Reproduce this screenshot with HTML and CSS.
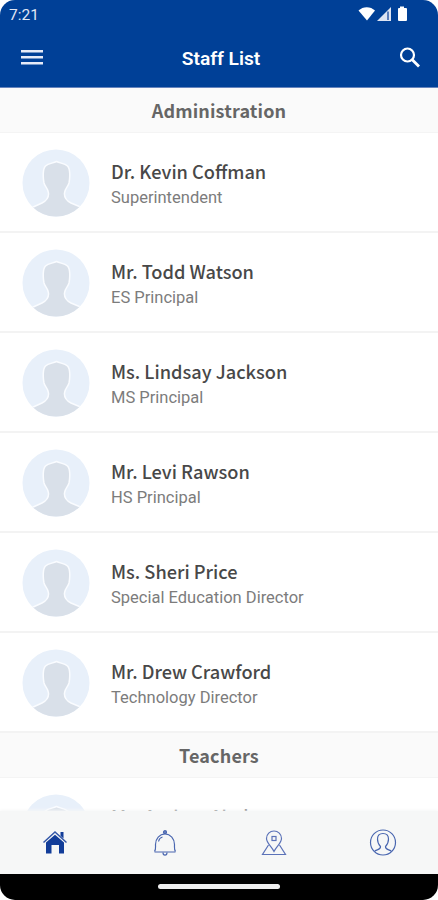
FILE: index.html
```html
<!DOCTYPE html>
<html lang="en">
<head>
    <meta charset="UTF-8">
    <meta name="viewport" content="width=device-width, initial-scale=1.0">
    <title>Staff List</title>
    <link rel="stylesheet" href="styles.css">
</head>
<body>

    <!-- Shared avatar -->
    <svg class="sprite">
        <symbol id="avatar" viewBox="0 0 68 68">
            <clipPath id="avatar-clip"><circle cx="34" cy="34" r="33.5"/></clipPath>
            <g clip-path="url(#avatar-clip)">
                <rect width="68" height="68" fill="#e8f0fa"/>
                <path d="M34.500 12.500C31 14.500 26.500 14 23.500 17C20.500 20 21 29 22 34C23 38 26 39 26.500 44C27 49 24 52 20 54L9 59V72H61V59L49 54C45 52 42 49 42.500 44C43 39 46 38 47 34C48 29 48.500 20 45.500 17C42.500 14 38 14.500 34.500 12.500Z" fill="#d9e0e9" stroke="#fafcff" stroke-width="1.500"/>
            </g>
        </symbol>
    </svg>

    <div class="phone">
        <header class="top">
            <div class="status-bar">
                <span class="time">7:21</span>
                <svg class="status-icons" width="52" height="18" viewBox="0 0 52 18" fill="#fff">
                    <path d="M0.500 5.500C5 1 12.500 1 17 5.500L9 15.500Z"/>
                    <path d="M33 2V16H19Z" fill="#dde4f3"/>
                    <path d="M30 6.500V15" stroke="#2f5ca8" stroke-width="1.500"/>
                    <path d="M42 1.500H46V3H48Q49 3 49 4V15Q49 16 48 16H41Q40 16 40 15V4Q40 3 41 3H42Z"/>
                </svg>
            </div>
            <div class="app-bar">
                <svg class="menu-icon" width="22" height="16" viewBox="0 0 22 16" fill="#e6ebf8">
                    <path d="M0 0H22V2.500H0ZM0 6H22V8.500H0ZM0 12H22V14.500H0Z"/>
                </svg>
                <h1>Staff List</h1>
                <svg class="search-icon" width="22" height="22" viewBox="0 0 22 22" fill="none" stroke="#fff">
                    <circle cx="8.500" cy="8" r="6.500" stroke-width="2.200"/>
                    <path d="M12.500 12L20 19.500" stroke-width="2.800"/>
                </svg>
            </div>
        </header>

        <main class="staff">
            <h2 class="section">Administration</h2>
            <div class="row">
                <svg class="avatar"><use href="#avatar"/></svg>
                <div class="info"><div class="name">Dr. Kevin Coffman</div><div class="role">Superintendent</div></div>
            </div>
            <div class="row">
                <svg class="avatar"><use href="#avatar"/></svg>
                <div class="info"><div class="name">Mr. Todd Watson</div><div class="role">ES Principal</div></div>
            </div>
            <div class="row">
                <svg class="avatar"><use href="#avatar"/></svg>
                <div class="info"><div class="name">Ms. Lindsay Jackson</div><div class="role">MS Principal</div></div>
            </div>
            <div class="row">
                <svg class="avatar"><use href="#avatar"/></svg>
                <div class="info"><div class="name">Mr. Levi Rawson</div><div class="role">HS Principal</div></div>
            </div>
            <div class="row">
                <svg class="avatar"><use href="#avatar"/></svg>
                <div class="info"><div class="name">Ms. Sheri Price</div><div class="role">Special Education Director</div></div>
            </div>
            <div class="row">
                <svg class="avatar"><use href="#avatar"/></svg>
                <div class="info"><div class="name">Mr. Drew Crawford</div><div class="role">Technology Director</div></div>
            </div>
            <h2 class="section">Teachers</h2>
            <div class="row">
                <svg class="avatar"><use href="#avatar"/></svg>
                <div class="info"><div class="name">Ms. Andrea Abel</div></div>
            </div>
        </main>

        <nav class="tabs">
            <!-- Home -->
            <svg width="28" height="28" viewBox="0 0 28 28" fill="#123d99">
                <path d="M2.500 13.500L14 3L25.500 13.500" fill="none" stroke="#3558a8" stroke-width="1.500"/>
                <path d="M19.500 3H22.500V9.500L19.500 6.700Z"/>
                <path d="M5 13.500L14 5.700L23 13.500V24.500H18V16H10.500V24.500H5Z"/>
            </svg>
            <!-- Alerts -->
            <svg width="28" height="28" viewBox="0 0 28 28" fill="none" stroke="#4a67b0" stroke-width="1.200">
                <path d="M4.500 22.500C6 21 5.500 19 5.500 15.500C5.500 10 9.500 5 15 5S24.500 10 24.500 15.500C24.500 19 24 21 25.500 22.500M4.500 23H25.500"/>
                <circle cx="15" cy="3.200" r="1.500" fill="#6b83c0"/>
                <path d="M13 23.500C13 27 17 27 17 23.500M8.500 12.500C9 10 10.500 8.500 12.500 8"/>
            </svg>
            <!-- Map -->
            <svg width="28" height="28" viewBox="0 0 28 28" fill="none" stroke="#5b72b8" stroke-width="1.200">
                <path d="M14 22.500C11.500 17.500 6.500 14 6.500 9.500A7.500 7.500 0 0 1 21.500 9.500C21.500 14 16.500 17.500 14 22.500Z"/>
                <rect x="12" y="7.500" width="4" height="4"/>
                <path d="M8.500 16L2.500 25.500H25.500L19.500 16"/>
            </svg>
            <!-- Profile -->
            <svg width="28" height="28" viewBox="0 0 28 28" fill="none" stroke="#4a67b0" stroke-width="1.200">
                <circle cx="14" cy="13.500" r="12.500"/>
                <path d="M5.500 22.500C7 20.500 12 21 11.500 17.500C9.500 15.500 8.500 13 8.500 10C8.500 6.500 10.500 4.500 14 4.500S19.500 6.500 19.500 10C19.500 13 18.500 15.500 16.500 17.500C16 21 21 20.500 22.500 22.500"/>
            </svg>
        </nav>

        <div class="gesture-bar"><div class="handle"></div></div>
    </div>

</body>
</html>
```

FILE: styles.css
```css
* {
    box-sizing: border-box;
}
body {
    margin: 0;
    background-color: #fff;
    font-family: Roboto, sans-serif;
}
.sprite {
    display: block;
    width: 0;
    height: 0;
}
.phone {
    display: flex;
    flex-direction: column;
    width: 438px;
    height: 900px;
    overflow: hidden;
    border-radius: 15px;
}
.top {
    height: 88px;
    flex-shrink: 0;
    background-color: #004097;
    border-bottom: 1px solid #6684bd;
    color: #fff;
}
.status-bar {
    display: flex;
    justify-content: space-between;
    height: 28px;
    padding: 5px 28px 0 9px;
}
.time {
    font-size: 15.5px;
    line-height: 20px;
    color: #e0e7f5;
}
.app-bar {
    display: flex;
    align-items: center;
    justify-content: space-between;
    height: 59px;
    padding: 0 17px 0 21px;
}
.app-bar h1 {
    margin: 2px 0 0;
    font-size: 19.2px;
    font-weight: 600;
}
.staff {
    flex: 1;
    min-height: 0;
    overflow: hidden;
}
.section {
    height: 44.5px;
    margin: 0;
    background-color: #fafafa;
    border-bottom: 1px solid #f4f4f4;
    font-family: "Noto Sans CJK SC", sans-serif;
    font-size: 18px;
    font-weight: 700;
    line-height: 44px;
    letter-spacing: 0.15px;
    text-align: center;
    color: #666;
}
.row {
    display: flex;
    align-items: center;
    gap: 21px;
    height: 100.15px;
    padding: 2px 0 0 22px;
    border-bottom: 2px solid #f3f3f3;
}
.avatar {
    width: 68px;
    height: 68px;
}
.info {
    height: 54px;
}
.name {
    font-family: "Noto Sans CJK SC", sans-serif;
    font-size: 18.2px;
    font-weight: 500;
    line-height: 30px;
    color: #484848;
}
.role {
    margin-top: 2px;
    font-size: 16.5px;
    line-height: 20px;
    color: #7c7c7c;
}
.tabs {
    display: flex;
    align-items: center;
    justify-content: space-around;
    height: 63px;
    flex-shrink: 0;
    background-color: #f6f7f7;
    box-shadow: 0 -1px 3px #f6f7f7;
}
.gesture-bar {
    display: flex;
    justify-content: center;
    height: 26px;
    flex-shrink: 0;
    padding-top: 10px;
    background-color: #000;
}
.handle {
    width: 122px;
    height: 5px;
    border-radius: 3px;
    background-color: #eee;
}
```
